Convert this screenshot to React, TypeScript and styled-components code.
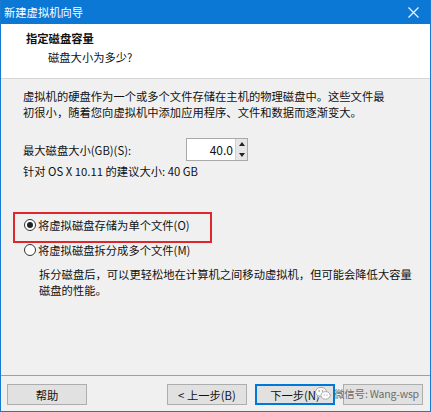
import React from "react";
import styled, { createGlobalStyle } from "styled-components";

const Global = createGlobalStyle`
  html, body { margin: 0; padding: 0; background: #ffffff; }
  body { font-family: "Noto Sans CJK SC", "Microsoft YaHei", sans-serif; }
  * { box-sizing: border-box; }
`;

const Window = styled.div`
  width: 431px;
  height: 412px;
  display: flex;
  flex-direction: column;
  border: 1px solid #1979d0;
  border-top: none;
  font-size: 11.3px;
  color: #111;
  overflow: hidden;
`;

const TitleBar = styled.div`
  height: 24px;
  margin: 0 -1px;
  background: #0b78d5;
  color: #fff;
  display: flex;
  align-items: center;
  justify-content: space-between;
  padding: 0 12px 0 4px;
  font-size: 11.3px;
`;

const Header = styled.div`
  height: 55px;
  background: #fff;
  border-bottom: 1px solid #d5d5d5;
  display: flex;
  flex-direction: column;
  padding: 5px 0 0 25px;
`;

const HeaderTitle = styled.div`
  font-weight: 700;
  line-height: 18px;
`;

const HeaderSub = styled.div`
  line-height: 18px;
  margin-top: 1px;
  padding-left: 22px;
`;

const Body = styled.div`
  flex: 1;
  background: #f0f0f0;
  padding: 9px 0 0 22px;
  display: flex;
  flex-direction: column;
`;

const Para = styled.div<{ $indent?: number; $top?: number }>`
  line-height: 16px;
  padding-left: ${(p) => p.$indent ?? 0}px;
  margin-top: ${(p) => p.$top ?? 0}px;
`;

const SizeRow = styled.div`
  display: flex;
  align-items: center;
  height: 23px;
  margin-top: 18px;
`;

const SizeLabel = styled.div`
  width: 163px;
`;

const NumberBox = styled.div`
  display: flex;
  height: 23px;
  border: 1px solid #a9a9a9;
  background: #fff;
`;

const NumberValue = styled.div`
  width: 48px;
  text-align: right;
  padding-right: 2px;
  line-height: 21px;
  font-size: 12px;
`;

const Spinner = styled.div`
  width: 12px;
  display: flex;
  flex-direction: column;
  background: #e6e6e6;
  border-left: 1px solid #d0d0d0;
`;

const SpinHalf = styled.div`
  flex: 1;
  display: flex;
  align-items: center;
  justify-content: center;
`;

const Hint = styled.div`
  line-height: 16px;
  margin-top: 2px;
`;

const RadioRow = styled.div<{ $highlight?: boolean; $top: number }>`
  position: relative;
  display: flex;
  align-items: center;
  gap: 2px;
  height: 16px;
  margin-top: ${(p) => p.$top}px;
  padding-left: 1px;
  &::before {
    content: "";
    display: ${(p) => (p.$highlight ? "block" : "none")};
    position: absolute;
    left: -10px;
    top: -5px;
    width: 195px;
    height: 27px;
    border: 2px solid #e0262d;
  }
`;

const RadioCircle = styled.span<{ $checked?: boolean }>`
  width: 12px;
  height: 12px;
  border-radius: 50%;
  border: 1px solid #333;
  background: #fff;
  display: flex;
  align-items: center;
  justify-content: center;
  &::after {
    content: "";
    width: 6px;
    height: 6px;
    border-radius: 50%;
    background: #222;
    display: ${(p) => (p.$checked ? "block" : "none")};
  }
`;

const Footer = styled.div`
  position: relative;
  height: 36px;
  border-top: 1px solid #a0a0a0;
  background: #f0f0f0;
  display: flex;
  align-items: flex-start;
  padding: 8px 7px 0 6px;
  gap: 8px;
`;

const Spacer = styled.div`
  flex: 1;
`;

const Button = styled.div<{ $primary?: boolean }>`
  width: 80px;
  height: 21px;
  border: 1px solid ${(p) => (p.$primary ? "#0078d7" : "#adadad")};
  box-shadow: ${(p) => (p.$primary ? "inset 0 0 0 1px #0078d7" : "none")};
  background: #e1e1e1;
  display: flex;
  align-items: center;
  justify-content: center;
  font-size: 11.3px;
  color: #111;
`;

const Watermark = styled.div`
  position: absolute;
  left: 314px;
  top: 10px;
  display: flex;
  align-items: center;
  gap: 3px;
  color: #6d6d6d;
  font-size: 10.5px;
  letter-spacing: -0.2px;
`;

const CloseIcon = () => (
  <svg width="11" height="11" viewBox="0 0 11 11">
    <path d="M0.5 0.5 L10.5 10.5 M10.5 0.5 L0.5 10.5" stroke="#fff" strokeWidth="1.1" />
  </svg>
);

const Arrow = ({ up }: { up?: boolean }) => (
  <svg width="6" height="4" viewBox="0 0 6 4">
    <path d={up ? "M0 4 L3 0 L6 4 Z" : "M0 0 L3 4 L6 0 Z"} fill="#222" />
  </svg>
);

const WeChatIcon = () => (
  <svg width="16" height="15" viewBox="0 0 16 15">
    <ellipse cx="6" cy="6" rx="5.5" ry="4.6" fill="#fafafa" stroke="#9a9a9a" strokeWidth="0.8" />
    <path d="M3 9.6 L2.4 12 L5 10.4 Z" fill="#fafafa" stroke="#9a9a9a" strokeWidth="0.6" />
    <ellipse cx="10.6" cy="9.4" rx="4.6" ry="3.8" fill="#ffffff" stroke="#9a9a9a" strokeWidth="0.8" />
    <circle cx="4.2" cy="5" r="0.8" fill="#888" />
    <circle cx="7.6" cy="5" r="0.8" fill="#888" />
    <circle cx="9.2" cy="9" r="0.6" fill="#888" />
    <circle cx="12" cy="9" r="0.6" fill="#888" />
  </svg>
);

export default function App() {
  return (
    <>
      <Global />
      <Window>
        <TitleBar>
          <span>新建虚拟机向导</span>
          <CloseIcon />
        </TitleBar>
        <Header>
          <HeaderTitle>指定磁盘容量</HeaderTitle>
          <HeaderSub>磁盘大小为多少?</HeaderSub>
        </Header>
        <Body>
          <Para>
            虚拟机的硬盘作为一个或多个文件存储在主机的物理磁盘中。这些文件最
            <br />
            初很小，随着您向虚拟机中添加应用程序、文件和数据而逐渐变大。
          </Para>
          <SizeRow>
            <SizeLabel>最大磁盘大小(GB)(S):</SizeLabel>
            <NumberBox>
              <NumberValue>40.0</NumberValue>
              <Spinner>
                <SpinHalf>
                  <Arrow up />
                </SpinHalf>
                <SpinHalf>
                  <Arrow />
                </SpinHalf>
              </Spinner>
            </NumberBox>
          </SizeRow>
          <Hint>针对 OS X 10.11 的建议大小: 40 GB</Hint>
          <RadioRow $highlight $top={38}>
            <RadioCircle $checked />
            <span>将虚拟磁盘存储为单个文件(O)</span>
          </RadioRow>
          <RadioRow $top={9}>
            <RadioCircle />
            <span>将虚拟磁盘拆分成多个文件(M)</span>
          </RadioRow>
          <Para $indent={16} $top={8}>
            拆分磁盘后，可以更轻松地在计算机之间移动虚拟机，但可能会降低大容量
            <br />
            磁盘的性能。
          </Para>
        </Body>
        <Footer>
          <Button>帮助</Button>
          <Spacer />
          <Button>&lt; 上一步(B)</Button>
          <Button $primary>下一步(N)</Button>
          <Button />
          <Watermark>
            <WeChatIcon />
            <span>微信号: Wang-wsp</span>
          </Watermark>
        </Footer>
      </Window>
    </>
  );
}
